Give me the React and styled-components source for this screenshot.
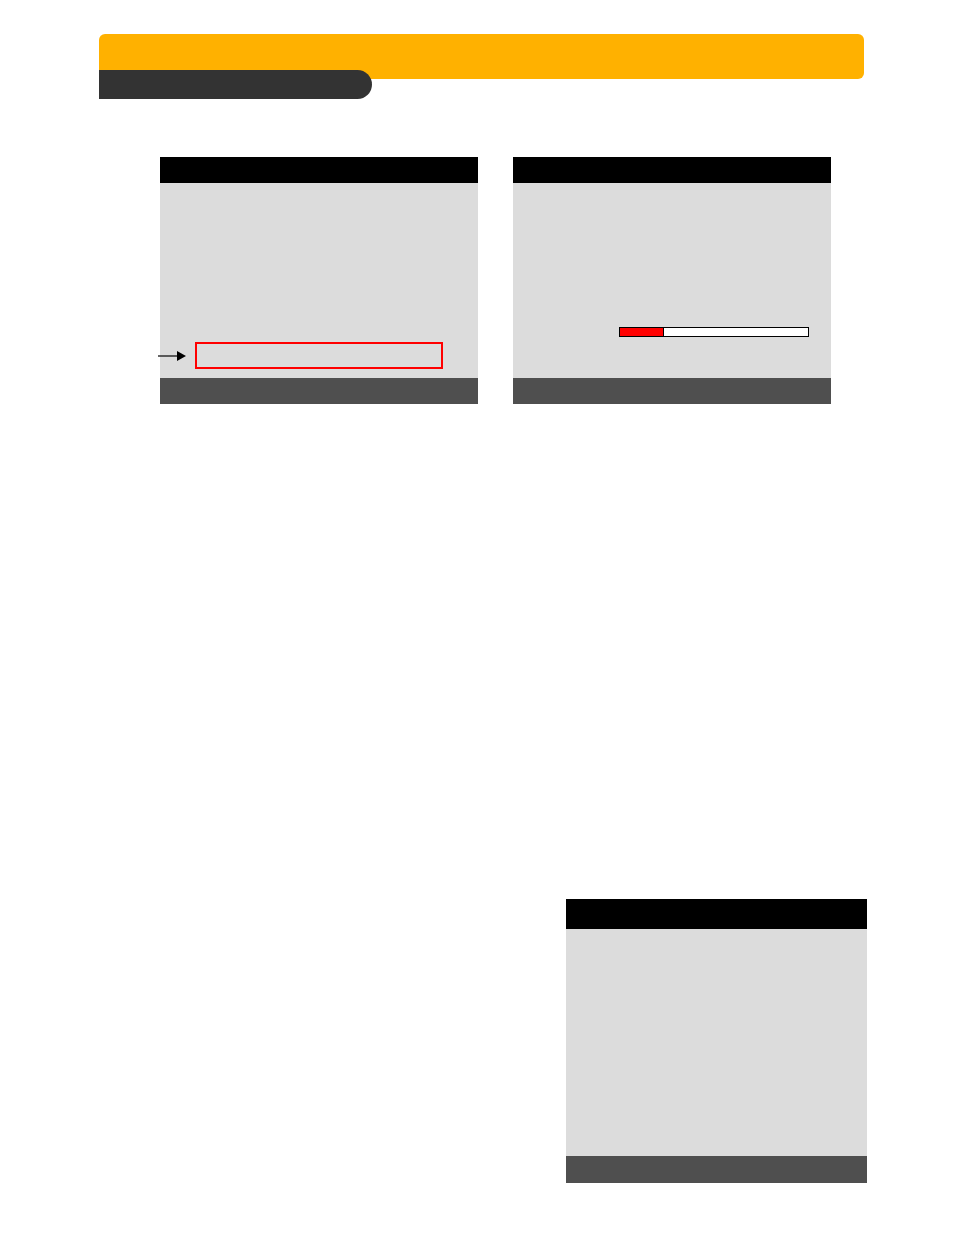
import React from "react";
import styled, { createGlobalStyle } from "styled-components";

const GlobalStyle = createGlobalStyle`
  html, body {
    margin: 0;
    padding: 0;
    background: #ffffff;
    font-family: "Liberation Sans", Arial, sans-serif;
  }
`;

const Page = styled.div`
  width: 954px;
  min-height: 1235px;
  padding-top: 34px;
  box-sizing: border-box;
`;

const Banner = styled.header`
  margin-left: 99px;
  width: 765px;
`;

const YellowBar = styled.div`
  height: 45px;
  background: #ffb100;
  border-radius: 6px 6px 6px 0;
`;

const SectionTab = styled.div`
  margin-top: -9px;
  width: 273px;
  height: 29px;
  background: #333333;
  border-radius: 0 15px 15px 0;
`;

const ScreenRow = styled.section`
  display: flex;
  gap: 35px;
  margin-top: 58px;
  margin-left: ${(p) => p.$left}px;
`;

const Screen = styled.div`
  width: ${(p) => p.$width}px;
  display: flex;
  flex-direction: column;
`;

const TitleBar = styled.div`
  height: ${(p) => p.$h}px;
  background: #000000;
`;

const Body = styled.div`
  height: ${(p) => p.$h}px;
  background: #dcdcdc;
  box-sizing: border-box;
  padding-top: ${(p) => p.$padTop || 0}px;
  padding-left: ${(p) => p.$padLeft || 0}px;
`;

const StatusBar = styled.div`
  height: ${(p) => p.$h}px;
  background: #4f4f4f;
`;

const PointerRow = styled.div`
  display: flex;
  align-items: center;
  margin-left: -2px;
`;

const Highlight = styled.div`
  margin-left: 9px;
  width: 248px;
  height: 27px;
  box-sizing: border-box;
  border: 2px solid #ff0000;
`;

const Progress = styled.div`
  width: 190px;
  height: 10px;
  box-sizing: border-box;
  border: 1px solid #000000;
  background: #ffffff;
  display: flex;
`;

const ProgressFill = styled.div`
  height: 100%;
  background: #ff0000;
  border-right: 1px solid #000000;
`;

const LowerRow = styled.section`
  margin-top: 495px;
  margin-left: 566px;
`;

function Arrow() {
  return (
    <svg width="28" height="12" viewBox="0 0 28 12">
      <line x1="0" y1="6" x2="20" y2="6" stroke="#000" strokeWidth="1.2" />
      <polygon points="19,1 28,6 19,11" fill="#000" />
    </svg>
  );
}

export default function App() {
  const progress = 23;
  return (
    <>
      <GlobalStyle />
      <Page>
        <Banner>
          <YellowBar />
          <SectionTab />
        </Banner>

        <ScreenRow $left={160}>
          <Screen $width={318}>
            <TitleBar $h={26} />
            <Body $h={195} $padTop={159}>
              <PointerRow>
                <Arrow />
                <Highlight />
              </PointerRow>
            </Body>
            <StatusBar $h={26} />
          </Screen>

          <Screen $width={318}>
            <TitleBar $h={26} />
            <Body $h={195} $padTop={144} $padLeft={106}>
              <Progress>
                <ProgressFill style={{ width: `${progress}%` }} />
              </Progress>
            </Body>
            <StatusBar $h={26} />
          </Screen>
        </ScreenRow>

        <LowerRow>
          <Screen $width={301}>
            <TitleBar $h={30} />
            <Body $h={227} />
            <StatusBar $h={27} />
          </Screen>
        </LowerRow>
      </Page>
    </>
  );
}
